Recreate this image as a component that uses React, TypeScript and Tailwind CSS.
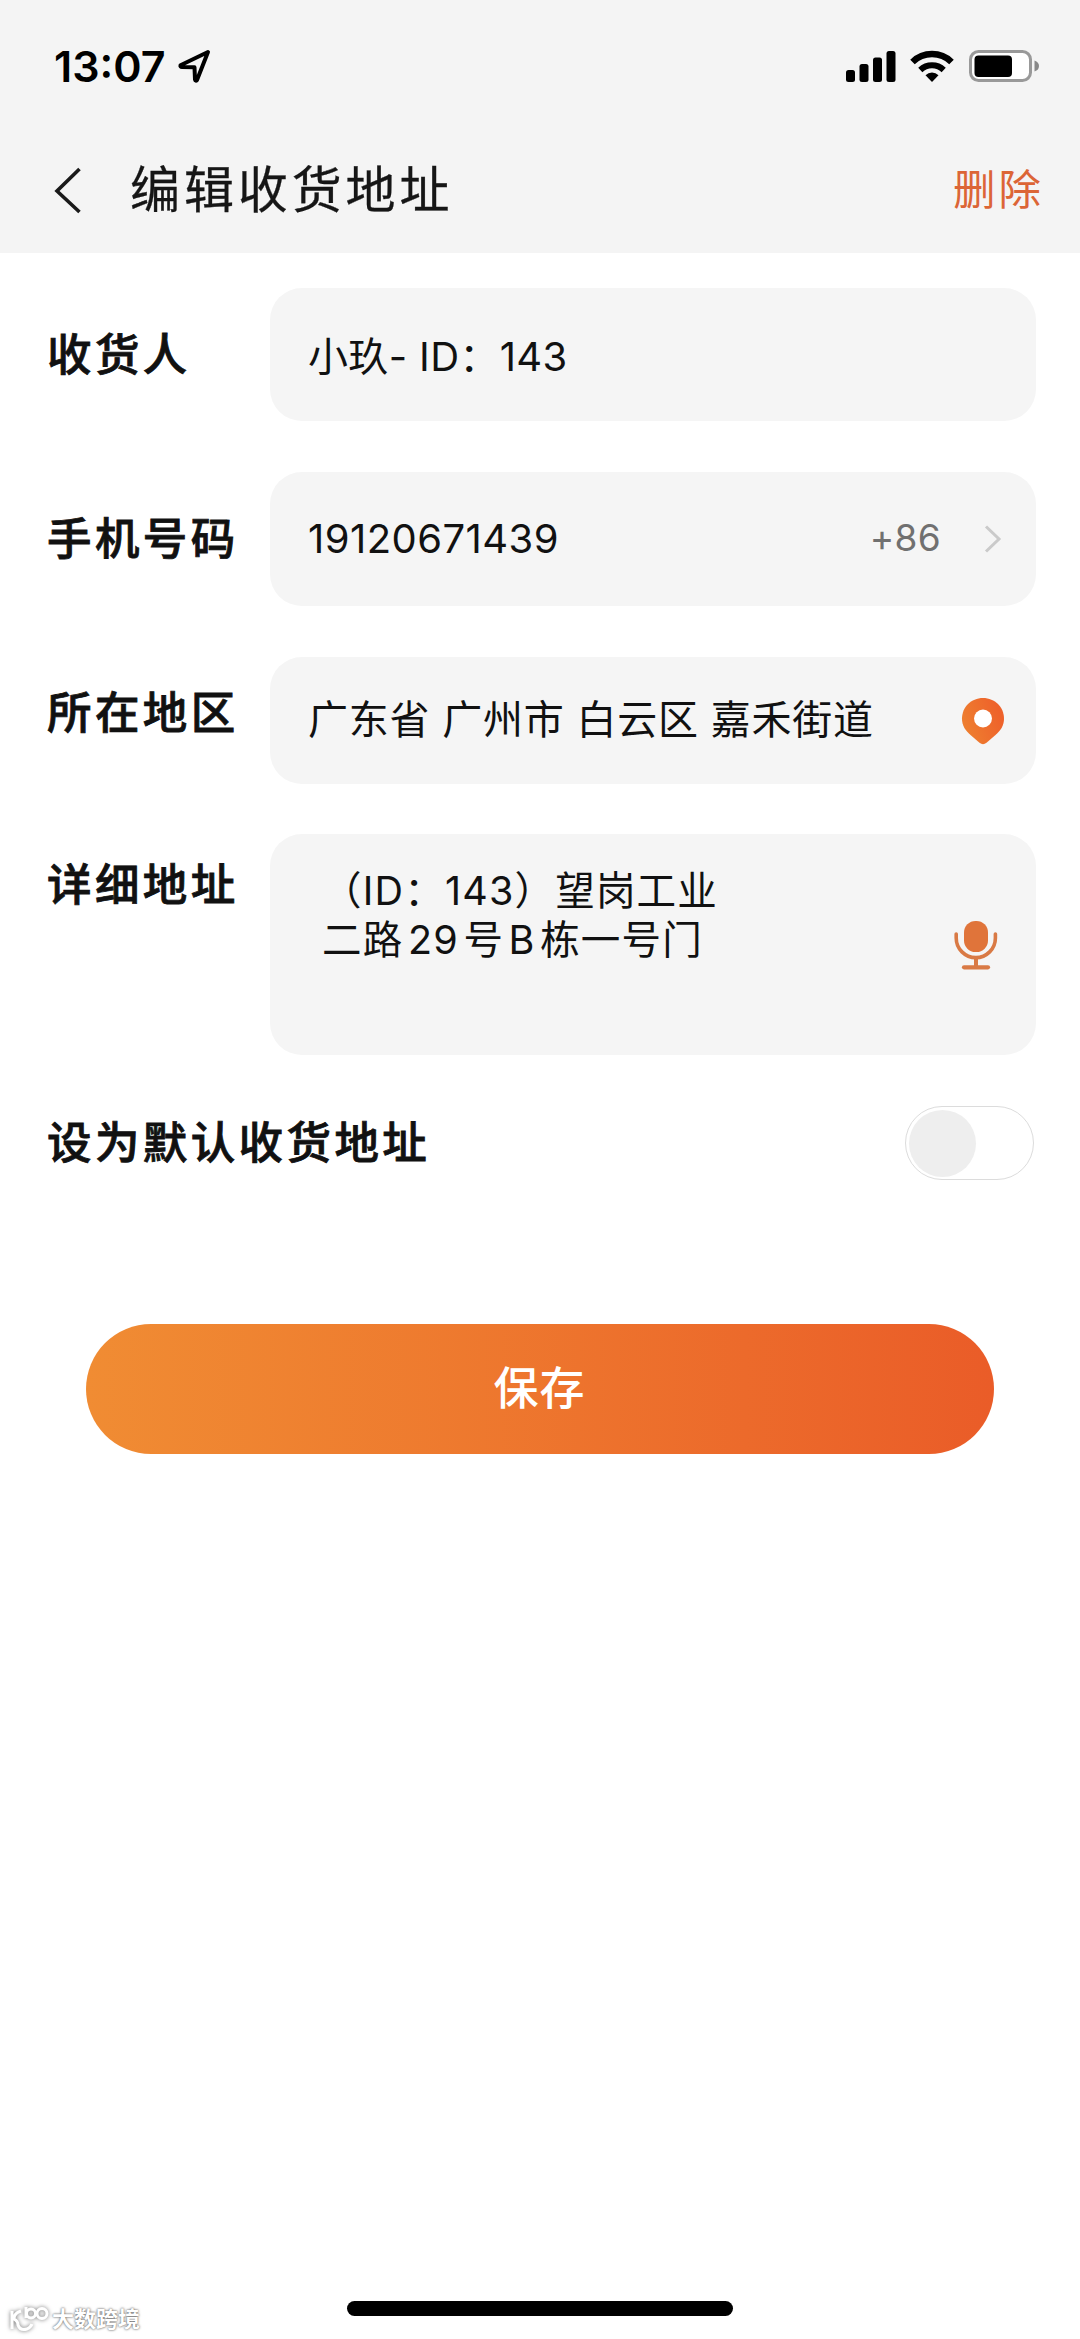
import type { ReactNode } from "react";

function StatusBar() {
  return (
    <div className="flex h-[132px] items-center justify-between pl-[54px] pr-[40px]">
      <div className="flex items-center">
        <span className="w-[123px] text-[43px] leading-[44px] font-semibold text-black">13:07</span>
        <svg width="34" height="34" viewBox="0 0 34 34" fill="none">
          <path
            d="M31 3 L3.5 16.2 Q3 18 5 18 L17.5 18.3 L18 30.5 Q18.5 32.5 20 31 Z"
            stroke="#000"
            strokeWidth="4"
            strokeLinejoin="round"
          />
        </svg>
      </div>
      <div className="flex items-center">
        <svg width="50" height="32" viewBox="0 0 50 32" fill="#000">
          <rect x="0" y="20" width="9" height="12" rx="2.5" />
          <rect x="13.5" y="14" width="9" height="18" rx="2.5" />
          <rect x="27" y="7.5" width="9" height="24.5" rx="2.5" />
          <rect x="40.5" y="1" width="9" height="31" rx="2.5" />
        </svg>
        <svg className="ml-[14px]" width="44" height="32" viewBox="0 0 44 32" fill="none" stroke="#000">
          <path d="M2.5 12 A28 28 0 0 1 41.5 12" strokeWidth="6.5" />
          <path d="M10.3 20 A17 17 0 0 1 33.7 20" strokeWidth="6" />
          <path d="M22 32 L15.5 25.3 A9.2 9.2 0 0 1 28.5 25.3 Z" fill="#000" stroke="none" />
        </svg>
        <svg className="ml-[15px]" width="71" height="32" viewBox="0 0 71 32">
          <rect x="1.5" y="1.5" width="60" height="29" rx="8" fill="#fff" stroke="#999" strokeWidth="3" />
          <rect x="5.5" y="5.5" width="37.5" height="21.5" rx="4" fill="#000" />
          <path d="M65.5 10.5 Q70 12 70 16 Q70 20 65.5 21.5 Z" fill="#888" />
        </svg>
      </div>
    </div>
  );
}

function NavBar() {
  return (
    <div className="flex h-[121px] items-center pb-[5px] pl-[52px] pr-[36px]">
      <svg width="30" height="48" viewBox="0 0 30 48" fill="none">
        <path d="M27.5 3 L5 25 L27.5 46" stroke="#1a1a1a" strokeWidth="3.6" />
      </svg>
      <h1 className="ml-[48px] flex-1 text-[50px] leading-[60px] font-normal tracking-[3.9px] text-[#161616] [-webkit-text-stroke:0.3px_#161616]">
        编辑收货地址
      </h1>
      <button className="text-[42.5px] leading-[60px] tracking-[3px] text-[#dc6536]">删除</button>
    </div>
  );
}

// weight sits between medium and bold
const LABEL =
  "text-[44.5px] leading-[60px] font-medium tracking-[3.4px] whitespace-nowrap text-[#111] [-webkit-text-stroke:0.8px_#111]";

function Row({ label, className, children }: { label: ReactNode; className: string; children: ReactNode }) {
  return (
    <div className={`flex pl-[47px] pr-[44px] ${className}`}>
      <span className={`w-[223px] shrink-0 ${LABEL}`}>{label}</span>
      {children}
    </div>
  );
}

const BOX = "flex flex-1 rounded-[32px] bg-[#f5f5f5] pl-[38px] text-[40px] text-[#111]";

function PinIcon() {
  return (
    <svg width="44" height="48" viewBox="0 0 44 48">
      <defs>
        <linearGradient id="pin" x1="0" y1="1" x2="1" y2="0.6">
          <stop offset="0" stopColor="#ee8430" />
          <stop offset="1" stopColor="#ee622b" />
        </linearGradient>
      </defs>
      <path
        d="M22 1 C10 1 1 10.3 1 21.5 C1 29 4.5 33.6 9.5 38 L18.5 45.8 Q22 48.5 25.5 45.8 L34.5 38 C39.5 33.6 43 29 43 21.5 C43 10.3 34 1 22 1 Z"
        fill="url(#pin)"
      />
      <circle cx="22" cy="21.5" r="9" fill="#fff" />
    </svg>
  );
}

function MicIcon() {
  return (
    <svg width="44" height="50" viewBox="0 0 44 50" fill="none">
      <rect x="10" y="1" width="24" height="31" rx="11.5" fill="#e0743a" />
      <path d="M2.2 14 V18 A19.6 19.6 0 0 0 41.4 18 V14" stroke="#d97a45" strokeWidth="3.6" strokeLinecap="round" />
      <path d="M22 38 V46" stroke="#d97a45" strokeWidth="4" />
      <path d="M10 47.3 H34" stroke="#d97a45" strokeWidth="4.2" strokeLinecap="round" />
    </svg>
  );
}

function Watermark() {
  return (
    <div className="absolute bottom-[5px] left-[8px] flex items-center">
      <svg
        className="drop-shadow-[0_0_2px_rgba(0,0,0,0.55)]"
        width="42"
        height="30"
        viewBox="0 0 42 30"
        fill="none"
        stroke="#fff"
        strokeWidth="3"
      >
        <path d="M4 7 V25 M13 7 Q6 9 6 15 Q10 17 10 21 Q12 27 19 25 Q23 23 24 20" />
        <path d="M18 3 V14" />
        <circle cx="23" cy="9.5" r="4.5" />
        <circle cx="34" cy="9.5" r="5" />
      </svg>
      <span className="ml-[2px] text-[22px] leading-[30px] font-bold text-white [text-shadow:0_0_2px_rgba(0,0,0,0.55),0_0_3px_rgba(0,0,0,0.35)]">
        大数跨境
      </span>
    </div>
  );
}

export default function App() {
  return (
    <div className="relative flex h-[2339px] w-[1080px] flex-col bg-white font-[Inter,'Noto_Sans_CJK_SC',sans-serif]">
      <header className="h-[253px] bg-[#f4f4f4]">
        <StatusBar />
        <NavBar />
      </header>

      <main className="flex flex-1 flex-col pt-[35px]">
        <Row label="收货人" className="h-[133px] items-center">
          <div className={`${BOX} h-full items-center`}>
            <span className="pt-[4px] tracking-[0.35px] whitespace-pre">小玖- ID：143</span>
          </div>
        </Row>
        <Row label="手机号码" className="mt-[51px] h-[134px] items-center">
          <div className={`${BOX} h-full items-center pr-[34px]`}>
            <span className="flex-1 tracking-[0.45px]">19120671439</span>
            <span className="pb-[3px] text-[37px] tracking-[0.3px] text-[#707070]">+86</span>
            <svg className="ml-[43px]" width="18" height="30" viewBox="0 0 18 30" fill="none">
              <path d="M2 2.5 L15 15 L2 27.5" stroke="#cacaca" strokeWidth="3" />
            </svg>
          </div>
        </Row>
        <Row label={<span className="block pb-[16px]">所在地区</span>} className="mt-[51px] h-[127px] items-center">
          <div className={`${BOX} h-full items-center pr-[31px]`}>
            <span className="flex-1 pb-[2px] tracking-[0.75px] whitespace-nowrap">广东省 广州市 白云区 嘉禾街道</span>
            <PinIcon />
          </div>
        </Row>
        <Row label={<span className="block pt-[21px]">详细地址</span>} className="mt-[50px] h-[221px] items-start">
          <div className={`${BOX} h-full items-center pr-[38px]`}>
            <div className="h-full flex-1 pt-[33px] pl-[14px] text-[39.5px] leading-[49px] tracking-[1.2px] whitespace-nowrap">
              <p>（ID：143）望岗工业</p>
              <p>
                二路<span className="mx-[4.5px]">29</span>号<span className="mx-[4.5px]">B</span>栋一号门
              </p>
            </div>
            <MicIcon />
          </div>
        </Row>

        <div className="mt-[51px] flex h-[74px] items-center justify-between pl-[47px] pr-[46px]">
          <span className={LABEL}>设为默认收货地址</span>
          <div className="flex h-[74px] w-[129px] items-center rounded-full border border-[#dcdcdc] pl-[3px]">
            <span className="h-[67px] w-[67px] rounded-full bg-[#eee]" />
          </div>
        </div>

        <button className="mx-[86px] mt-[144px] h-[130px] rounded-full bg-gradient-to-r from-[#f08c33] to-[#ea5c28] pr-[1px] text-[45px] font-medium tracking-[1px] text-white">
          保存
        </button>
      </main>

      <div className="mb-[23px] h-[15px] w-[386px] self-center rounded-full bg-black" />
      <Watermark />
    </div>
  );
}
